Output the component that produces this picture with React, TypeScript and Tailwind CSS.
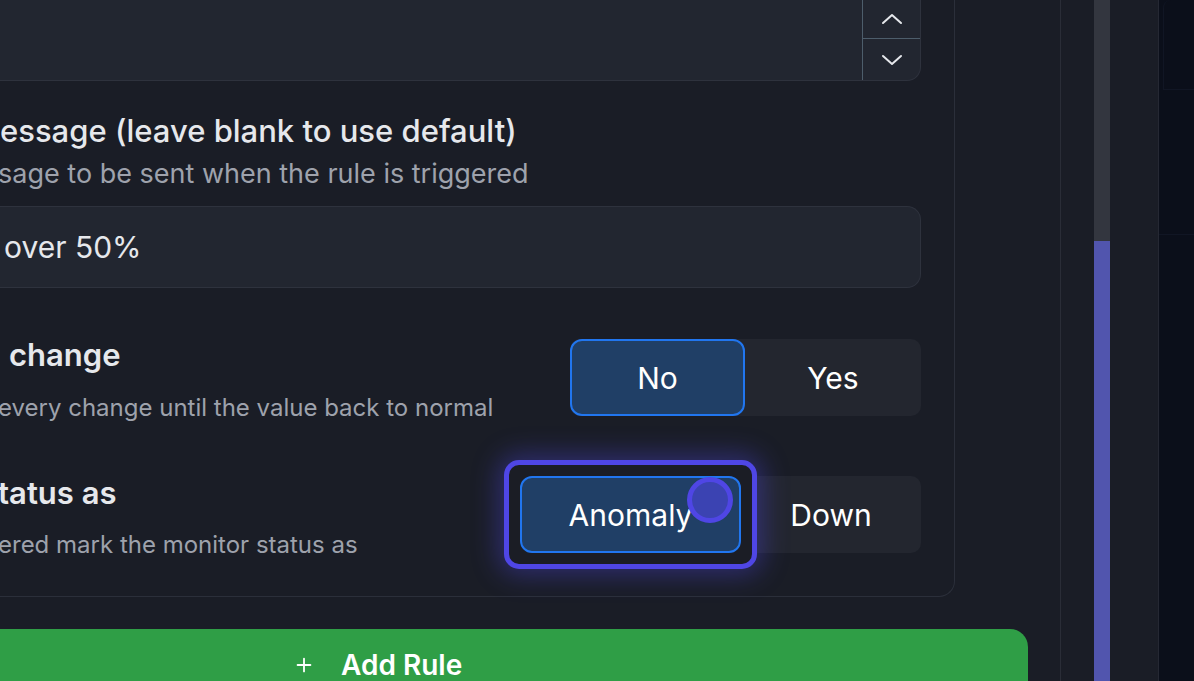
import { Plus } from 'lucide-react'

// ── Segmented toggle button ──
function Segment({
  label,
  active,
  width,
}: {
  label: string
  active?: boolean
  width: string
}) {
  return (
    <button
      className={
        active
          ? `${width} h-full rounded-[12px] border-2 border-[#2176ef] bg-[#203f66] text-white text-[30px] leading-none`
          : `${width} h-full rounded-[12px] text-white text-[30px] leading-none`
      }
    >
      {label}
    </button>
  )
}

function Chevron({ up }: { up?: boolean }) {
  return (
    <svg width="22" height="12" viewBox="0 0 22 12" fill="none">
      <path
        d={up ? 'M2 10 L11 2 L20 10' : 'M2 2 L11 10 L20 2'}
        stroke="#e5e7eb"
        strokeWidth="2"
        strokeLinecap="round"
        strokeLinejoin="round"
      />
    </svg>
  )
}

export default function App() {
  return (
    <div
      className="w-[1194px] h-[681px] overflow-hidden bg-[#1a1d26] flex"
      style={{ fontFamily: 'Inter, "Noto Sans", sans-serif' }}
    >
      {/* ── Main column ── */}
      <div className="w-[1061px] shrink-0 border-r-[1.5px] border-[#2a2d37] flex flex-col">
        {/* Rule card */}
        <div className="w-[955px] border-r-[1.5px] border-b-[1.5px] border-[#2b2f3a] rounded-br-[16px] pr-[33px] pb-[34px]">
          {/* Number input with spinner */}
          <div className="h-[81px] flex bg-[#222630] border-r-[1.5px] border-b-[1.5px] border-[#2e323d] rounded-br-[14px] overflow-hidden">
            <div className="flex-1" />
            <div className="w-[58px] flex flex-col border-l-[1.5px] border-[#4d5d6b]">
              <div className="h-[39px] flex items-center justify-center border-b-[1.5px] border-[#4d5d6b]">
                <Chevron up />
              </div>
              <div className="flex-1 flex items-center justify-center">
                <Chevron />
              </div>
            </div>
          </div>

          {/* Message */}
          <div className="mt-[30px] text-[31px] leading-[40px] font-medium text-[#e6e8ec] whitespace-nowrap">
            essage (leave blank to use default)
          </div>
          <div className="mt-[6px] -ml-[2px] text-[27px] leading-[34px] text-[#9ea2ac] whitespace-nowrap">
            sage to be sent when the rule is triggered
          </div>
          <div className="mt-[15px] h-[82px] flex items-center bg-[#222630] border-[1.5px] border-l-0 border-[#2e323d] rounded-r-[14px] pl-[4px] text-[30px] text-[#e6e8ec]">
            over 50%
          </div>

          {/* Alert on change */}
          <div className="mt-[47px] flex justify-between items-start">
            <div className="whitespace-nowrap">
              <div className="pl-[9px] text-[31px] leading-[40px] font-semibold text-[#e6e8ec]">change</div>
              <div className="mt-[16px] -ml-[2px] text-[24px] leading-[34px] text-[#9ea2ac]">
                every change until the value back to normal
              </div>
            </div>
            <div className="mt-[4px] h-[77px] flex rounded-[10px] bg-[#23262f]">
              <Segment label="No" active width="w-[175px]" />
              <Segment label="Yes" width="w-[176px]" />
            </div>
          </div>

          {/* Mark status as */}
          <div className="mt-[48px] flex justify-between items-start">
            <div className="whitespace-nowrap">
              <div className="-ml-[2px] text-[31px] leading-[40px] font-semibold text-[#e6e8ec]">tatus as</div>
              <div className="mt-[15px] -ml-[2px] text-[24px] leading-[34px] text-[#9ea2ac]">
                ered mark the monitor status as
              </div>
            </div>
            <div className="mt-[3px] h-[77px] flex rounded-[10px] bg-[#23262f]">
              <div className="relative h-full">
                {/* focus ring */}
                <span className="absolute -inset-[16px] rounded-[15px] border-[5px] border-[#4f46e5] bg-[#1b1d25] shadow-[0_0_26px_6px_rgba(79,70,229,0.38)]" />
                <div className="relative h-full">
                  <Segment label="Anomaly" active width="w-[221px]" />
                  {/* pointer */}
                  <span className="absolute left-[167px] top-[1px] w-[46px] h-[46px] rounded-full border-[5px] border-[#4f46e5] bg-[#4f46e5]/60" />
                </div>
              </div>
              <Segment label="Down" width="w-[180px]" />
            </div>
          </div>
        </div>

        {/* Add Rule */}
        <button className="mt-[32px] w-[1028px] h-[72px] shrink-0 bg-[#2f9e46] rounded-tr-[18px] flex items-center pl-[293px] gap-[26px] text-white text-[28px] font-semibold">
          <Plus size={22} strokeWidth={2} />
          <span>Add Rule</span>
        </button>
      </div>

      {/* ── Scrollbar column ── */}
      <div className="w-[98px] shrink-0 border-r-[1.5px] border-[#252833] pl-[33px]">
        <div className="w-[16px] h-full flex flex-col">
          <div className="h-[241px] bg-[#33363f]" />
          <div className="flex-1 bg-[#5155ae]" />
        </div>
      </div>

      {/* ── Dark edge ── */}
      <div className="flex-1 bg-[#0b0f1a] flex flex-col">
        <div className="h-[90px] ml-[4px] border-l border-b border-[#111624] rounded-tl-[8px]" />
        <div className="h-[145px] border-b border-[#111624]" />
      </div>
    </div>
  )
}
